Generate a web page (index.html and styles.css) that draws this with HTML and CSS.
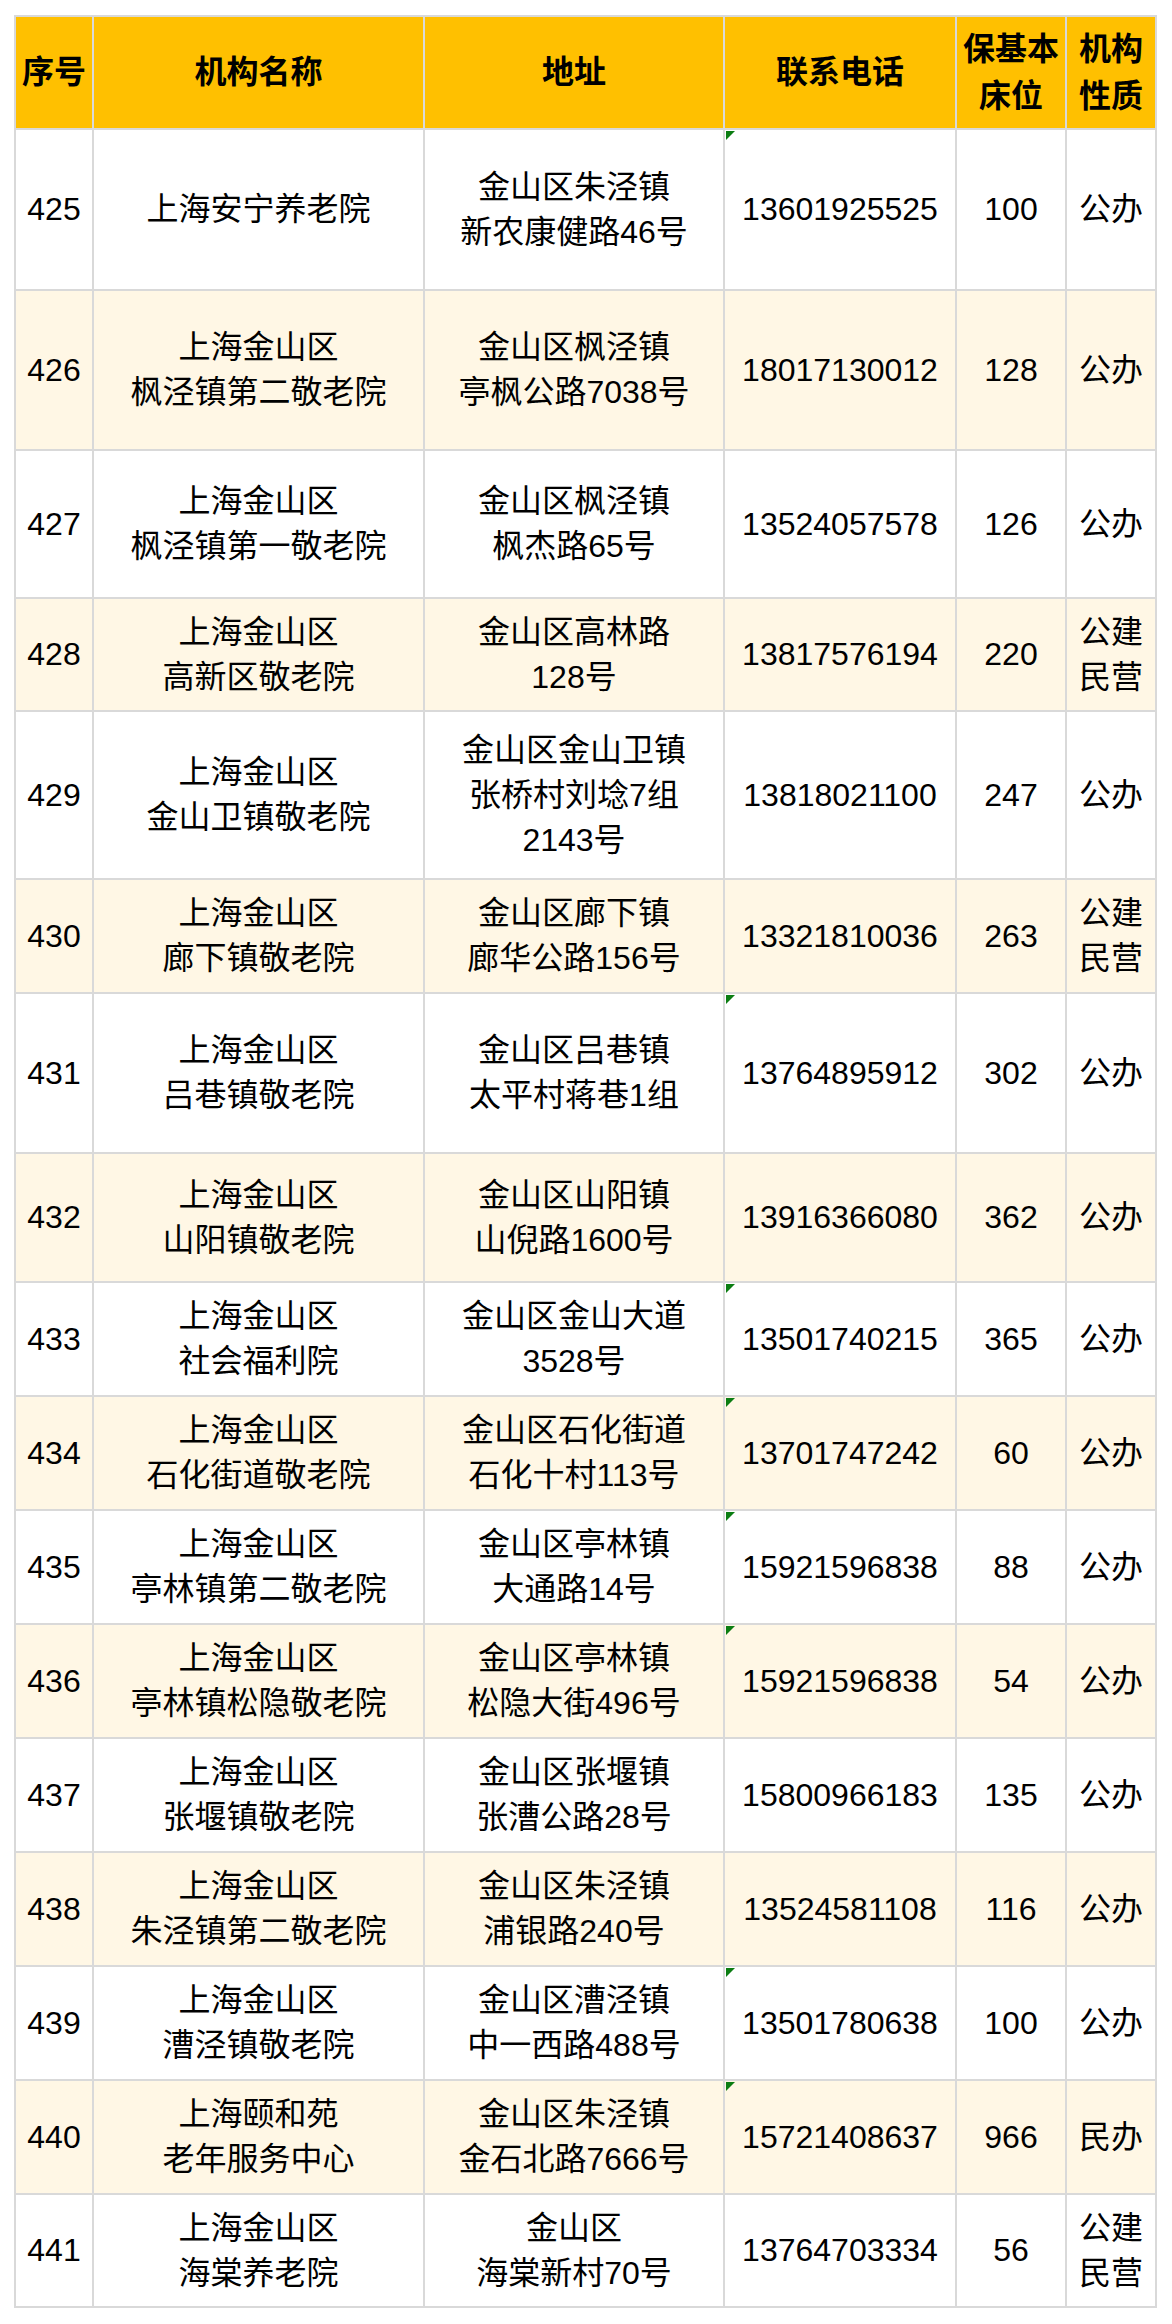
FILE: index.html
```html
<!DOCTYPE html>
<html lang="zh-CN">
<head>
<meta charset="utf-8">
<title>金山区养老机构</title>
<link rel="stylesheet" href="styles.css">
</head>
<body>
<div class="page">
<table class="grid">
  <colgroup>
    <col class="c-no"><col class="c-name"><col class="c-addr"><col class="c-tel"><col class="c-bed"><col class="c-type">
  </colgroup>
  <thead>
    <tr class="head">
      <th>序号</th><th>机构名称</th><th>地址</th><th>联系电话</th><th>保基本<br>床位</th><th>机构<br>性质</th>
    </tr>
  </thead>
  <tbody>
    <tr class="h161"><td>425</td><td>上海安宁养老院</td><td>金山区朱泾镇<br>新农康健路46号</td><td class="tel flag">13601925525</td><td>100</td><td>公办</td></tr>
    <tr class="h160"><td>426</td><td>上海金山区<br>枫泾镇第二敬老院</td><td>金山区枫泾镇<br>亭枫公路7038号</td><td class="tel">18017130012</td><td>128</td><td>公办</td></tr>
    <tr class="h148"><td>427</td><td>上海金山区<br>枫泾镇第一敬老院</td><td>金山区枫泾镇<br>枫杰路65号</td><td class="tel">13524057578</td><td>126</td><td>公办</td></tr>
    <tr class="h113"><td>428</td><td>上海金山区<br>高新区敬老院</td><td>金山区高林路<br>128号</td><td class="tel">13817576194</td><td>220</td><td>公建<br>民营</td></tr>
    <tr class="h168"><td>429</td><td>上海金山区<br>金山卫镇敬老院</td><td>金山区金山卫镇<br>张桥村刘埝7组<br>2143号</td><td class="tel">13818021100</td><td>247</td><td>公办</td></tr>
    <tr class="h114"><td>430</td><td>上海金山区<br>廊下镇敬老院</td><td>金山区廊下镇<br>廊华公路156号</td><td class="tel">13321810036</td><td>263</td><td>公建<br>民营</td></tr>
    <tr class="h160"><td>431</td><td>上海金山区<br>吕巷镇敬老院</td><td>金山区吕巷镇<br>太平村蒋巷1组</td><td class="tel flag">13764895912</td><td>302</td><td>公办</td></tr>
    <tr class="h129"><td>432</td><td>上海金山区<br>山阳镇敬老院</td><td>金山区山阳镇<br>山倪路1600号</td><td class="tel">13916366080</td><td>362</td><td>公办</td></tr>
    <tr class="h114"><td>433</td><td>上海金山区<br>社会福利院</td><td>金山区金山大道<br>3528号</td><td class="tel flag">13501740215</td><td>365</td><td>公办</td></tr>
    <tr class="h114"><td>434</td><td>上海金山区<br>石化街道敬老院</td><td>金山区石化街道<br>石化十村113号</td><td class="tel flag">13701747242</td><td>60</td><td>公办</td></tr>
    <tr class="h114"><td>435</td><td>上海金山区<br>亭林镇第二敬老院</td><td>金山区亭林镇<br>大通路14号</td><td class="tel flag">15921596838</td><td>88</td><td>公办</td></tr>
    <tr class="h114"><td>436</td><td>上海金山区<br>亭林镇松隐敬老院</td><td>金山区亭林镇<br>松隐大街496号</td><td class="tel flag">15921596838</td><td>54</td><td>公办</td></tr>
    <tr class="h114"><td>437</td><td>上海金山区<br>张堰镇敬老院</td><td>金山区张堰镇<br>张漕公路28号</td><td class="tel">15800966183</td><td>135</td><td>公办</td></tr>
    <tr class="h114"><td>438</td><td>上海金山区<br>朱泾镇第二敬老院</td><td>金山区朱泾镇<br>浦银路240号</td><td class="tel">13524581108</td><td>116</td><td>公办</td></tr>
    <tr class="h114"><td>439</td><td>上海金山区<br>漕泾镇敬老院</td><td>金山区漕泾镇<br>中一西路488号</td><td class="tel flag">13501780638</td><td>100</td><td>公办</td></tr>
    <tr class="h114"><td>440</td><td>上海颐和苑<br>老年服务中心</td><td>金山区朱泾镇<br>金石北路7666号</td><td class="tel flag">15721408637</td><td>966</td><td>民办</td></tr>
    <tr class="h113"><td>441</td><td>上海金山区<br>海棠养老院</td><td>金山区<br>海棠新村70号</td><td class="tel">13764703334</td><td>56</td><td>公建<br>民营</td></tr>
  </tbody>
</table>
</div>
</body>
</html>
```

FILE: styles.css
```css
html, body {
  margin: 0;
  padding: 0;
  background: #ffffff;
}

.page {
  padding: 15px 0 0 14px;
}

.grid {
  border-collapse: collapse;
  table-layout: fixed;
  width: 1143px;
  font-family: "Liberation Sans", "Noto Sans CJK SC", sans-serif;
  font-size: 32px;
  line-height: 45px;
  color: #000000;
}

.c-no { width: 78px; }
.c-name { width: 331px; }
.c-addr { width: 300px; }
.c-tel { width: 232px; }
.c-bed { width: 110px; }
.c-type { width: 90px; }

.grid th,
.grid td {
  border: 2px solid #d9d9d9;
  padding: 0 2px;
  text-align: center;
  vertical-align: middle;
  white-space: nowrap;
}

.grid th {
  background: #ffc000;
  font-weight: 700;
  line-height: 47px;
}

.head { height: 113px; }

.grid tbody tr:nth-child(even) td {
  background: #fff7e5;
}

.h113 { height: 113px; }
.h114 { height: 114px; }
.h129 { height: 129px; }
.h148 { height: 148px; }
.h160 { height: 160px; }
.h161 { height: 161px; }
.h168 { height: 168px; }

.tel { position: relative; }

.flag::before {
  content: "";
  position: absolute;
  left: 1px;
  top: 1px;
  width: 9px;
  height: 9px;
  background: #0b7d12;
  clip-path: polygon(0 0, 100% 0, 0 100%);
}
```
